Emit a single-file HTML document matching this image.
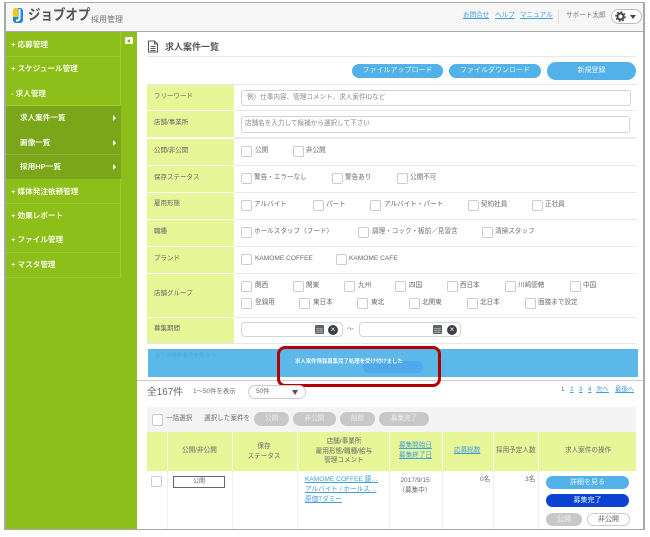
<!DOCTYPE html>
<html lang="ja"><head><meta charset="utf-8">
<style>
html,body{margin:0;padding:0;background:#fff}
body{width:650px;height:537px;overflow:hidden;position:relative;font-family:"Liberation Sans","Noto Sans CJK JP",sans-serif;color:#666}
#w{position:absolute;left:0;top:0;width:650px;height:537px;filter:blur(.35px)}
#w div,#w span,#w a,#w svg{position:absolute}
.t{font-size:6.6px;line-height:10px;white-space:nowrap;color:#6a6a6a}
.lb{left:154px;font-size:6.5px;line-height:10px;color:#666;white-space:nowrap}
.cb{width:11px;height:11px;box-sizing:border-box;border:1px solid #ccc;border-radius:2px;background:#fff}
.ln{left:147px;width:489px;height:1px;background:linear-gradient(to right,#fff 87px,#e8e8e8 87px)}
.lab{left:147px;width:87px;background:#e7f697}
.m{left:6px;width:115px;height:25px;box-sizing:border-box;border-bottom:1px solid #9ccb36;border-right:1px solid #9ccb36;background:#8cbf1a}
.m.s{background:#7ba61a;border-bottom-color:#8fb53a;border-right-color:#7ba61a}
.mt{font-size:7.6px;line-height:10px;font-weight:bold;color:#f6fbe6;white-space:nowrap}
.btn{border-radius:8px;color:#e8f5fd;font-size:7px;text-align:center;background:#52b1e8;white-space:nowrap}
.a{color:#3f9fe0;text-decoration:underline;font-size:6.6px;line-height:10px;white-space:nowrap}
.ar{width:0;height:0;border-left:3px solid #fff;border-top:3px solid transparent;border-bottom:3px solid transparent;left:113px}
.inp{background:#fff;border:1px solid #d4d4d4;border-radius:3px;box-sizing:border-box}
.g{background:#c8c8c8;border-radius:7px;color:#eee;font-size:6.6px;text-align:center;height:14px;line-height:14px;top:412px}
.vl{width:1px;top:432px;height:97px;background:#efefef}
.vh{width:1px;top:432px;height:39px;background:#fafdf0}
.x{width:10px;height:10px;border-radius:5px;background:#3b3f4a;color:#fff;font-size:8px;line-height:10px;text-align:center}
</style></head><body><div id="w">

<!-- frame -->
<div style="left:4px;top:2px;width:640px;height:527px;background:#fff"></div>
<div style="left:4px;top:2px;width:641px;height:1px;background:#aaa"></div>
<div style="left:4px;top:2px;width:2px;height:528px;background:#a8a8a8"></div>
<div style="left:643px;top:2px;width:2px;height:528px;background:#a8a8a8"></div>
<div style="left:4px;top:529px;width:641px;height:1px;background:#a8a8a8"></div>

<!-- header -->
<div style="left:6px;top:3px;width:637px;height:28px;background:#f6f6f6"></div>
<div style="left:6px;top:31px;width:637px;height:1px;background:#aaa"></div>
<svg style="left:12px;top:7px" width="12" height="17" viewBox="0 0 12 17"><rect x="1" y="1" width="10" height="15" rx="3" fill="#1e88d8"/><path d="M1 4a3 3 0 0 1 3-3h2v9H1z" fill="#f2c71c"/><path d="M7.5 2v9.5a2 2 0 0 1-2 2H4" fill="none" stroke="#fff" stroke-width="2"/></svg>
<span style="left:28px;top:7px;font-size:14.5px;line-height:18px;font-weight:bold;color:#555;white-space:nowrap;transform:scaleX(.86);transform-origin:left top">ジョブオプ</span>
<span class="t" style="left:91px;top:15px;font-size:8px;color:#777">採用管理</span>
<a class="a" style="left:463px;top:11px">お問合せ</a>
<a class="a" style="left:495px;top:11px">ヘルプ</a>
<a class="a" style="left:520px;top:11px">マニュアル</a>
<div style="left:558px;top:10px;width:1px;height:14px;background:#e2e2e2"></div>
<span class="t" style="left:566px;top:11px;color:#777">サポート太郎</span>
<div style="left:611px;top:9px;width:31px;height:15px;box-sizing:border-box;border:1px solid #bbb;border-radius:8px;background:#fff"></div>
<svg style="left:615px;top:11px" width="11" height="11" viewBox="0 0 11 11"><circle cx="5.5" cy="5.5" r="3" fill="none" stroke="#444" stroke-width="2"/><circle cx="5.5" cy="5.5" r="4.6" fill="none" stroke="#444" stroke-width="1.4" stroke-dasharray="1.8 1.8"/></svg>
<div style="left:630px;top:15px;width:0;height:0;border-left:3px solid transparent;border-right:3px solid transparent;border-top:4px solid #444"></div>

<!-- sidebar -->
<div style="left:6px;top:32px;width:131px;height:497px;background:#8cbf1a"></div>
<div class="m" style="top:32px"></div><span class="mt" style="left:11px;top:40px">+ 応募管理</span>
<div class="m" style="top:57px"></div><span class="mt" style="left:11px;top:64px">+ スケジュール管理</span>
<div class="m" style="top:81px"></div><span class="mt" style="left:11px;top:89px">- 求人管理</span>
<div class="m s" style="top:106px"></div><span class="mt" style="left:20px;top:113px">求人案件一覧</span><div class="ar" style="top:115px"></div>
<div class="m s" style="top:130px"></div><span class="mt" style="left:20px;top:138px">画像一覧</span><div class="ar" style="top:140px"></div>
<div class="m s" style="top:155px"></div><span class="mt" style="left:20px;top:162px">採用HP一覧</span><div class="ar" style="top:164px"></div>
<div class="m" style="top:179px"></div><span class="mt" style="left:11px;top:187px">+ 媒体発注依頼管理</span>
<div class="m" style="top:204px"></div><span class="mt" style="left:11px;top:211px">+ 効果レポート</span>
<div class="m" style="top:228px"></div><span class="mt" style="left:11px;top:235px">+ ファイル管理</span>
<div class="m" style="top:253px"></div><span class="mt" style="left:11px;top:260px">+ マスタ管理</span>
<div style="left:125px;top:37px;width:8px;height:7px;background:#fff;border-radius:1px"></div>
<div style="left:127px;top:39px;width:0;height:0;border-right:3px solid #7ba61a;border-top:2px solid transparent;border-bottom:2px solid transparent"></div>

<!-- title -->
<svg style="left:147px;top:40px" width="12" height="13" viewBox="0 0 12 13"><path d="M1.5 1h6l3 3v8h-9zM7.5 1v3h3M3.5 6.5h5M3.5 8.5h5M3.5 10.5h5" fill="none" stroke="#555" stroke-width="1"/></svg>
<span class="t" style="left:165px;top:42px;font-size:9px;font-weight:bold;color:#555">求人案件一覧</span>
<div class="ln" style="top:56px;background:#e8e8e8"></div>

<!-- top buttons -->
<div class="btn" style="left:352px;top:64px;width:91px;height:14px;line-height:14px">ファイルアップロード</div>
<div class="btn" style="left:449px;top:64px;width:92px;height:14px;line-height:14px">ファイルダウンロード</div>
<div class="btn" style="left:547px;top:62px;width:89px;height:18px;line-height:18px;border-radius:9px">新規登録</div>

<!-- form -->
<div class="lab" style="top:84px;height:259px"></div>
<div class="ln" style="top:84px;background:#e8e8e8"></div>
<div class="ln" style="top:110px"></div>
<div class="ln" style="top:137px;height:2px"></div>
<div class="ln" style="top:165px"></div>
<div class="ln" style="top:192px"></div>
<div class="ln" style="top:219px"></div>
<div class="ln" style="top:246px"></div>
<div class="ln" style="top:273px"></div>
<div class="ln" style="top:317px"></div>
<div class="ln" style="top:343px;background:#e8e8e8"></div>

<span class="lb" style="top:92px">フリーワード</span>
<span class="lb" style="top:118px">店舗/事業所</span>
<span class="lb" style="top:146px">公開/非公開</span>
<span class="lb" style="top:173px">保存ステータス</span>
<span class="lb" style="top:199px">雇用形態</span>
<span class="lb" style="top:227px">職種</span>
<span class="lb" style="top:254px">ブランド</span>
<span class="lb" style="top:289px">店舗グループ</span>
<span class="lb" style="top:324px">募集期間</span>

<div class="inp" style="left:241px;top:90px;width:390px;height:16px"></div>
<span class="t" style="left:247px;top:93px;color:#888">例）仕事内容、管理コメント、求人案件IDなど</span>
<div class="inp" style="left:241px;top:116px;width:389px;height:17px"></div>
<span class="t" style="left:245px;top:119px;color:#888">店舗名を入力して候補から選択して下さい</span>

<div class="cb" style="left:241px;top:146px"></div><span class="t" style="left:255px;top:146px">公開</span>
<div class="cb" style="left:293px;top:146px"></div><span class="t" style="left:306px;top:146px">非公開</span>

<div class="cb" style="left:241px;top:173px"></div><span class="t" style="left:254px;top:173px">警告・エラーなし</span>
<div class="cb" style="left:332px;top:173px"></div><span class="t" style="left:345px;top:173px">警告あり</span>
<div class="cb" style="left:397px;top:173px"></div><span class="t" style="left:410px;top:173px">公開不可</span>

<div class="cb" style="left:241px;top:200px"></div><span class="t" style="left:254px;top:200px">アルバイト</span>
<div class="cb" style="left:313px;top:200px"></div><span class="t" style="left:326px;top:200px">パート</span>
<div class="cb" style="left:370px;top:200px"></div><span class="t" style="left:384px;top:200px">アルバイト・パート</span>
<div class="cb" style="left:468px;top:200px"></div><span class="t" style="left:481px;top:200px">契約社員</span>
<div class="cb" style="left:532px;top:200px"></div><span class="t" style="left:545px;top:200px">正社員</span>

<div class="cb" style="left:241px;top:227px"></div><span class="t" style="left:254px;top:227px">ホールスタッフ（フード）</span>
<div class="cb" style="left:358px;top:227px"></div><span class="t" style="left:372px;top:227px">調理・コック・板前／見習含</span>
<div class="cb" style="left:482px;top:227px"></div><span class="t" style="left:495px;top:227px">清掃スタッフ</span>

<div class="cb" style="left:241px;top:254px"></div><span class="t" style="left:255px;top:254px">KAMOME COFFEE</span>
<div class="cb" style="left:336px;top:254px"></div><span class="t" style="left:349px;top:254px">KAMOME CAFE</span>

<div class="cb" style="left:241px;top:281px"></div><span class="t" style="left:255px;top:281px">関西</span>
<div class="cb" style="left:293px;top:281px"></div><span class="t" style="left:306px;top:281px">関東</span>
<div class="cb" style="left:344px;top:281px"></div><span class="t" style="left:358px;top:281px">九州</span>
<div class="cb" style="left:395px;top:281px"></div><span class="t" style="left:409px;top:281px">四国</span>
<div class="cb" style="left:447px;top:281px"></div><span class="t" style="left:460px;top:281px">西日本</span>
<div class="cb" style="left:505px;top:281px"></div><span class="t" style="left:518px;top:281px">川崎管轄</span>
<div class="cb" style="left:570px;top:281px"></div><span class="t" style="left:583px;top:281px">中国</span>

<div class="cb" style="left:241px;top:298px"></div><span class="t" style="left:255px;top:298px">登録用</span>
<div class="cb" style="left:299px;top:298px"></div><span class="t" style="left:313px;top:298px">東日本</span>
<div class="cb" style="left:357px;top:298px"></div><span class="t" style="left:371px;top:298px">東北</span>
<div class="cb" style="left:409px;top:298px"></div><span class="t" style="left:422px;top:298px">北関東</span>
<div class="cb" style="left:467px;top:298px"></div><span class="t" style="left:480px;top:298px">北日本</span>
<div class="cb" style="left:525px;top:298px"></div><span class="t" style="left:538px;top:298px">面接まで設定</span>

<div class="inp" style="left:241px;top:322px;width:102px;height:15px;border-radius:4px"></div>
<svg style="left:315px;top:325px" width="9" height="9" viewBox="0 0 9 9"><rect width="9" height="9" rx="1" fill="#5e6468"/><path d="M1 3.5h7M1 5.5h7M1 7.5h7M3 3v5M6 3v5" stroke="#c4c8ca" stroke-width=".5"/></svg>
<div class="x" style="left:328px;top:325px">×</div>
<span class="t" style="left:347px;top:325px">～</span>
<div class="inp" style="left:359px;top:322px;width:102px;height:15px;border-radius:4px"></div>
<svg style="left:433px;top:325px" width="9" height="9" viewBox="0 0 9 9"><rect width="9" height="9" rx="1" fill="#5e6468"/><path d="M1 3.5h7M1 5.5h7M1 7.5h7M3 3v5M6 3v5" stroke="#c4c8ca" stroke-width=".5"/></svg>
<div class="x" style="left:447px;top:325px">×</div>

<!-- blue bar -->
<div style="left:148px;top:349px;width:490px;height:28px;background:#5db8ea"></div>
<span class="t" style="left:155px;top:351px;font-size:5.5px;color:#4ba6dc">全ての検索条件を見る ∨</span>
<div style="left:363px;top:361px;width:60px;height:12px;border-radius:6px;background:#4ea8ec"></div>
<span class="t" style="left:295px;top:357px;font-size:5.4px;font-weight:bold;color:#f2f9fe">求人案件情報募集完了処理を受け付けました</span>
<div style="left:137px;top:380px;width:506px;height:1px;background:#ccc"></div>
<div style="left:277px;top:346px;width:164px;height:41px;box-sizing:border-box;border:3.5px solid #b30000;border-radius:8px"></div>

<!-- list -->
<span class="t" style="left:147px;top:386px;font-size:9.8px;line-height:13px;color:#666">全167件</span>
<span class="t" style="left:193px;top:387px;font-size:6.4px">1～50件を表示</span>
<div style="left:248px;top:385px;width:58px;height:14px;box-sizing:border-box;border:1px solid #ccc;border-radius:7px;background:#fff"></div>
<span class="t" style="left:256px;top:387px;font-size:6.4px">50件</span>
<div style="left:292px;top:390px;width:0;height:0;border-left:3px solid transparent;border-right:3px solid transparent;border-top:5px solid #555"></div>
<span class="t" style="left:561px;top:385px;font-size:6.4px">1</span>
<a class="a" style="left:570px;top:385px;font-size:6.4px">2</a>
<a class="a" style="left:579px;top:385px;font-size:6.4px">3</a>
<a class="a" style="left:588px;top:385px;font-size:6.4px">4</a>
<a class="a" style="left:596px;top:385px;font-size:6.4px">次へ</a>
<a class="a" style="left:615px;top:385px;font-size:6.4px">最後へ</a>

<!-- action bar -->
<div style="left:147px;top:407px;width:489px;height:25px;background:#f4f4f4"></div>
<div class="cb" style="left:152px;top:414px;height:12px"></div>
<span class="t" style="left:166px;top:414px">一括選択</span>
<span class="t" style="left:204px;top:414px">選択した案件を</span>
<div class="g" style="left:254px;width:35px">公開</div>
<div class="g" style="left:293px;width:43px">非公開</div>
<div class="g" style="left:340px;width:35px">削除</div>
<div class="g" style="left:379px;width:50px">募集完了</div>

<!-- table -->
<div style="left:147px;top:432px;width:489px;height:39px;background:#e7f697"></div>
<div class="vl" style="left:167px"></div><div class="vl" style="left:232px"></div><div class="vl" style="left:297px"></div><div class="vl" style="left:389px"></div><div class="vl" style="left:442px"></div><div class="vl" style="left:493px"></div><div class="vl" style="left:538px"></div>
<div class="vh" style="left:167px"></div><div class="vh" style="left:232px"></div><div class="vh" style="left:297px"></div><div class="vh" style="left:389px"></div><div class="vh" style="left:442px"></div><div class="vh" style="left:493px"></div><div class="vh" style="left:538px"></div>

<span class="t" style="left:182px;top:446px">公開/非公開</span>
<span class="t" style="left:240px;top:442px;width:48px;text-align:center">保存<br>ステータス</span>
<span class="t" style="left:304px;top:437px;width:80px;text-align:center;line-height:9.5px">店舗/事業所<br>雇用形態/職種/給与<br>管理コメント</span>
<a class="a" style="left:399px;top:441px">募集開始日<br>募集終了日</a>
<a class="a" style="left:454px;top:446px">応募総数</a>
<span class="t" style="left:496px;top:446px">採用予定人数</span>
<span class="t" style="left:565px;top:446px">求人案件の操作</span>

<div class="cb" style="left:151px;top:476px"></div>
<div style="left:173px;top:476px;width:52px;height:12px;box-sizing:border-box;border:1px solid #667;text-align:center;font-size:6px;line-height:10px;color:#666;background:#fff">公開</div>
<a class="a" style="left:305px;top:475px">KAMOME COFFEE 銀…<br>アルバイト / ホールス…<br>原価Tダミー</a>
<span class="t" style="left:390px;top:476px;width:50px;line-height:9.5px;text-align:center">2017/9/15<br>（募集中）</span>
<span class="t" style="left:480px;top:475px">0名</span>
<span class="t" style="left:525px;top:475px">3名</span>
<div class="btn" style="left:546px;top:476px;width:83px;height:13px;line-height:13px">詳細を見る</div>
<div class="btn" style="left:546px;top:494px;width:83px;height:13px;line-height:13px;background:#0b42d4">募集完了</div>
<div class="btn" style="left:546px;top:513px;width:36px;height:13px;line-height:13px;background:#c8c8c8;color:#f2f2f2">公開</div>
<div class="btn" style="left:587px;top:513px;width:43px;height:13px;line-height:11px;box-sizing:border-box;border:1px solid #ccc;background:#fff;color:#666">非公開</div>

</div></body></html>
